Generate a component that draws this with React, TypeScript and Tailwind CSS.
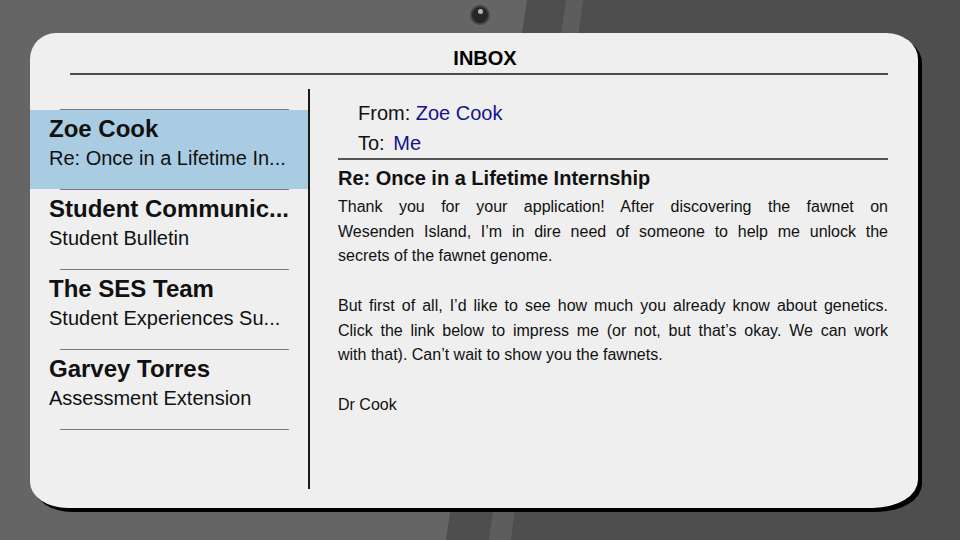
import React from 'react';

type Mail = { from: string; subject: string; selected?: boolean };

const mails: Mail[] = [
  { from: 'Zoe Cook', subject: 'Re: Once in a Lifetime In...', selected: true },
  { from: 'Student Communic...', subject: 'Student Bulletin' },
  { from: 'The SES Team', subject: 'Student Experiences Su...' },
  { from: 'Garvey Torres', subject: 'Assessment Extension' },
];

// each paragraph is kept line by line so the justified breaks match the screen
const body: string[][] = [
  [
    'Thank you for your application! After discovering the fawnet on',
    'Wesenden Island, I’m in dire need of someone to help me unlock the',
    'secrets of the fawnet genome.',
  ],
  [
    'But first of all, I’d like to see how much you already know about genetics.',
    'Click the link below to impress me (or not, but that’s okay. We can work',
    'with that). Can’t wait to show you the fawnets.',
  ],
  ['Dr Cook'],
];

const Backdrop = () => (
  <svg className="absolute inset-0" width="960" height="540" viewBox="0 0 960 540">
    <rect width="960" height="540" fill="#656565" />
    <polygon points="527,0 960,0 960,540 446,540" fill="#4e4e4e" />
    <polygon points="566,0 583,0 511,540 489,540" fill="#5d5d5d" />
  </svg>
);

export default function App() {
  return (
    <div className="relative w-[960px] h-[540px] overflow-hidden font-['Liberation_Sans',Arial,sans-serif]">
      <Backdrop />

      <div className="relative flex flex-col">
        {/* Camera */}
        <div className="flex justify-center pt-[5px] h-[33px]">
          <div className="w-[20px] h-[20px] rounded-full bg-[#262626] border-2 border-[#474747] flex justify-center pt-[2px]">
            <div className="w-[5px] h-[5px] rounded-full bg-[#b5b5b5]" />
          </div>
        </div>

        {/* Screen */}
        <div className="ml-[30px] w-[888px] h-[475px] bg-[#efefef] rounded-tl-[26px] rounded-tr-[32px_26px] rounded-bl-[38px_26px] rounded-br-[45px_28px] shadow-[4px_4px_0_0_#000] flex flex-col">
          <div className="pt-[13px] pl-[22px] text-center text-[20px] leading-[24px] font-bold text-black">INBOX</div>
          <div className="mt-[3px] ml-[40px] mr-[30px] h-[2px] bg-[#4d4d4d]" />

          <div className="mt-[14px] flex h-[400px]">
            {/* Message list */}
            <div className="w-[278px] pt-[20px]">
              {mails.map((m, i) => (
                <div key={i}>
                  <div className="ml-[30px] mr-[19px] h-px bg-[#7a7a7a]" />
                  <div className={`h-[79px] pl-[19px] pt-[5px] ${m.selected ? 'bg-[#a9cce2]' : ''}`}>
                    <div className="text-[24px] leading-[28px] font-bold text-[#111] whitespace-nowrap">{m.from}</div>
                    <div className="text-[20px] leading-[30px] text-[#111] whitespace-nowrap">{m.subject}</div>
                  </div>
                </div>
              ))}
              <div className="ml-[30px] mr-[19px] h-px bg-[#7a7a7a]" />
            </div>

            <div className="w-[2px] bg-[#1a1a1a]" />

            {/* Reading pane */}
            <div className="flex-1 pl-[28px] pr-[30px] pt-[9px]">
              <div className="pl-[20px] text-[20px] leading-[30px] text-[#111]">
                <div>
                  From: <span className="text-[#14148c]">Zoe Cook</span>
                </div>
                <div>
                  To: <span className="ml-[3px] text-[#14148c]">Me</span>
                </div>
              </div>
              <div className="h-[2px] bg-[#555]" />
              <div className="mt-[5px] text-[20px] leading-[26px] font-bold text-[#111]">
                Re: Once in a Lifetime Internship
              </div>
              <div className="mt-[4px] text-[16px] leading-[24.7px] text-[#111] flex flex-col gap-[24.7px]">
                {body.map((para, pi) => (
                  <div key={pi}>
                    {para.map((line, li) => (
                      <div
                        key={li}
                        className={
                          li < para.length - 1
                            ? 'whitespace-nowrap text-justify [text-align-last:justify]'
                            : 'whitespace-nowrap'
                        }
                      >
                        {line}
                      </div>
                    ))}
                  </div>
                ))}
              </div>
            </div>
          </div>
        </div>
      </div>
    </div>
  );
}
